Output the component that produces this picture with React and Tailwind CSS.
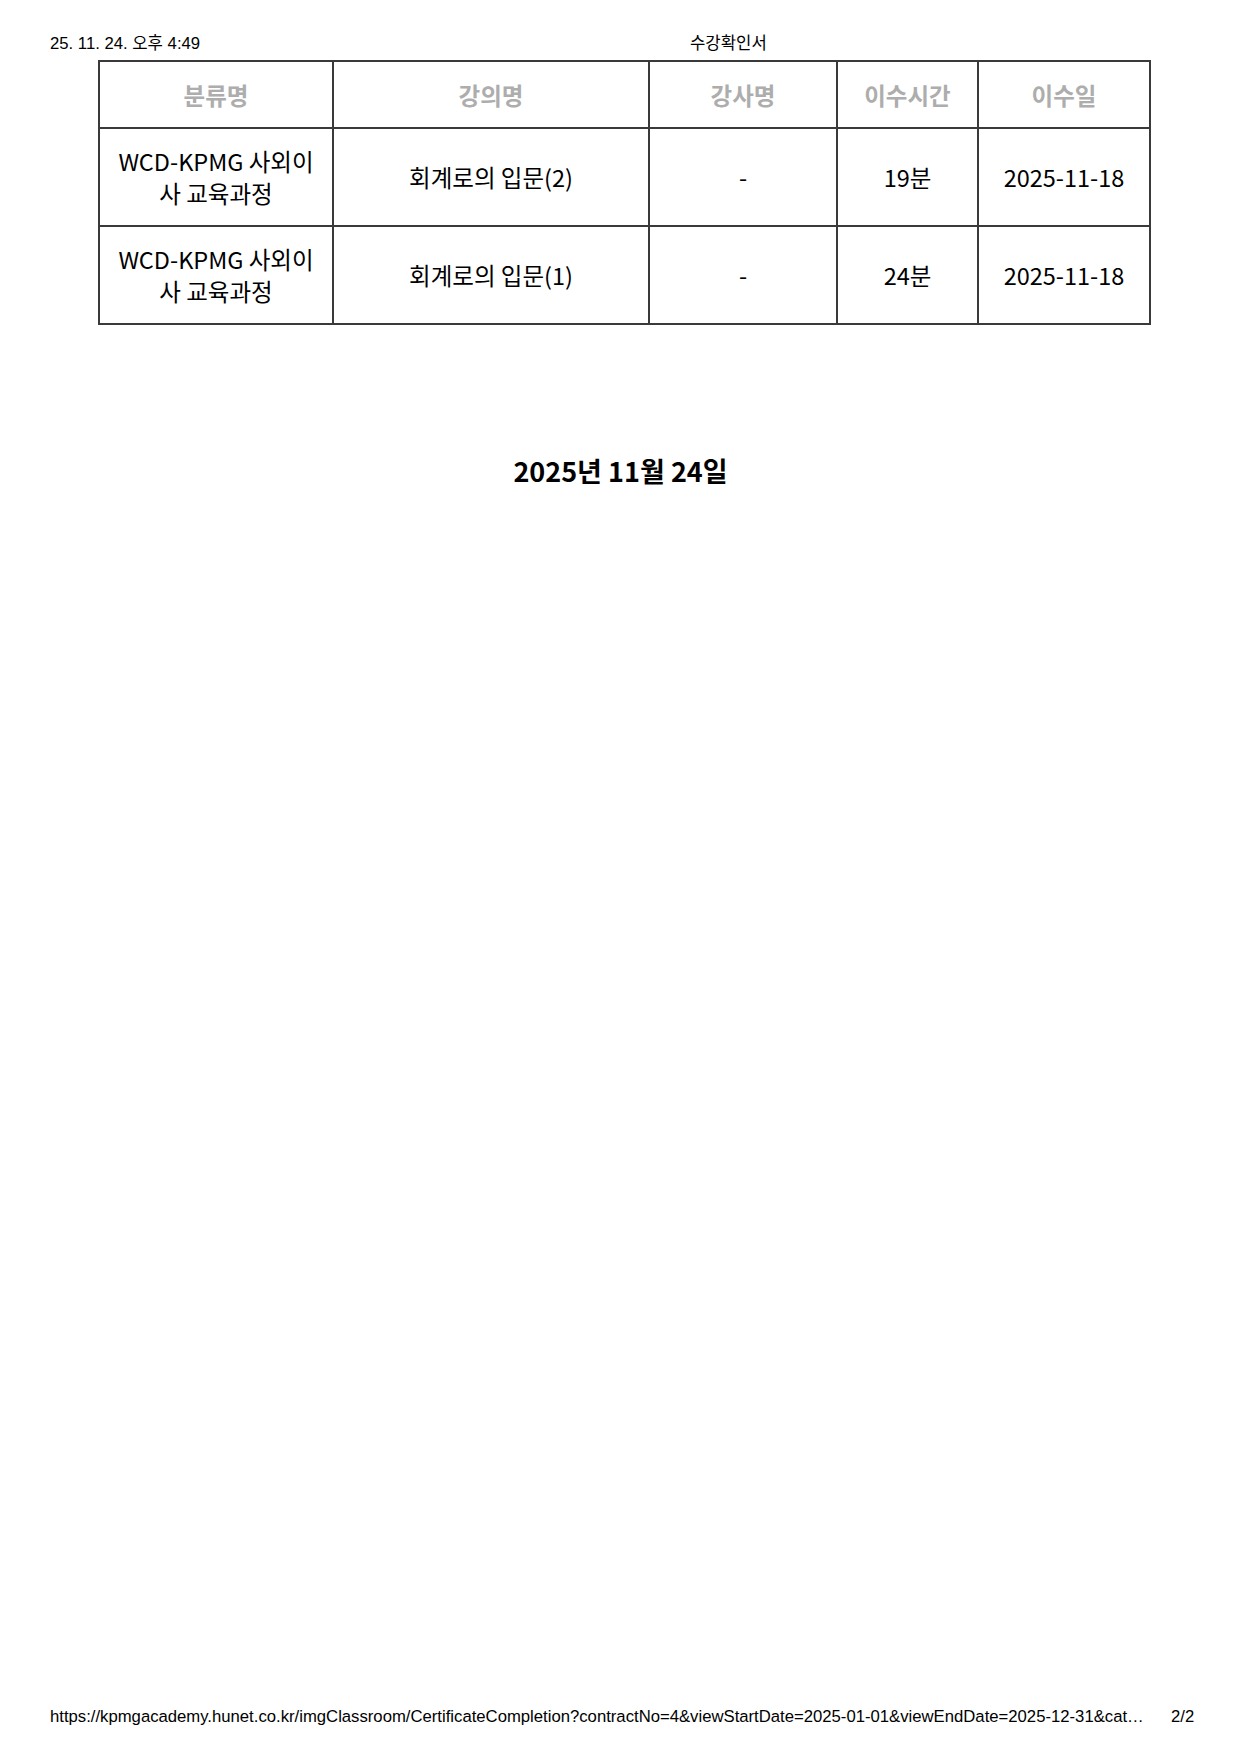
const rows = [
  { cat: 'WCD-KPMG 사외이사 교육과정', name: '회계로의 입문(2)', teacher: '-', time: '19분', date: '2025-11-18' },
  { cat: 'WCD-KPMG 사외이사 교육과정', name: '회계로의 입문(1)', teacher: '-', time: '24분', date: '2025-11-18' },
]

const cols = ['w-[234px]', 'w-[316px]', 'w-[188px]', 'w-[141px]', 'w-[172px]']
const heads = ['분류명', '강의명', '강사명', '이수시간', '이수일']

export default function App() {
  return (
    <div className="flex h-[1755px] w-[1241px] flex-col bg-white text-black">
      <div className="flex pl-[50px] pt-[33px] text-[16.7px] leading-[22px] font-['Liberation_Sans','Noto_Sans_CJK_KR',sans-serif]">
        <span className="w-[640px]">25. 11. 24. 오후 4:49</span>
        <span>수강확인서</span>
      </div>

      <table className="mt-[5px] ml-[98px] w-[1051px] table-fixed border-collapse font-['Noto_Sans_CJK_KR',sans-serif] text-[23.5px] leading-[32px]">
        <colgroup>
          {cols.map((c, i) => (
            <col key={i} className={c} />
          ))}
        </colgroup>
        <thead>
          <tr className="h-[67px]">
            {heads.map((h) => (
              <th key={h} className="border-2 border-[#3a3a3a] px-[10px] text-center font-bold text-[#adadad]">
                {h}
              </th>
            ))}
          </tr>
        </thead>
        <tbody>
          {rows.map((r, i) => (
            <tr key={i} className="h-[98px]">
              <td className="border-2 border-[#3a3a3a] px-[10px] text-center">{r.cat}</td>
              <td className="border-2 border-[#3a3a3a] px-[10px] text-center">{r.name}</td>
              <td className="border-2 border-[#3a3a3a] px-[10px] text-center">{r.teacher}</td>
              <td className="border-2 border-[#3a3a3a] px-[10px] text-center">{r.time}</td>
              <td className="border-2 border-[#3a3a3a] px-[10px] text-center">{r.date}</td>
            </tr>
          ))}
        </tbody>
      </table>

      <div className="mt-[128px] text-center font-['Noto_Sans_CJK_KR',sans-serif] text-[27px] font-bold leading-[36px]">
        2025년 11월 24일
      </div>

      <div className="mt-auto mb-[27px] flex items-center pl-[50px] text-[16.7px] leading-[22px] font-['Liberation_Sans','Noto_Sans_CJK_KR',sans-serif]">
        <span className="w-[1121px] whitespace-nowrap">
          https://kpmgacademy.hunet.co.kr/imgClassroom/CertificateCompletion?contractNo=4&amp;viewStartDate=2025-01-01&amp;viewEndDate=2025-12-31&amp;cat…
        </span>
        <span>2/2</span>
      </div>
    </div>
  )
}
